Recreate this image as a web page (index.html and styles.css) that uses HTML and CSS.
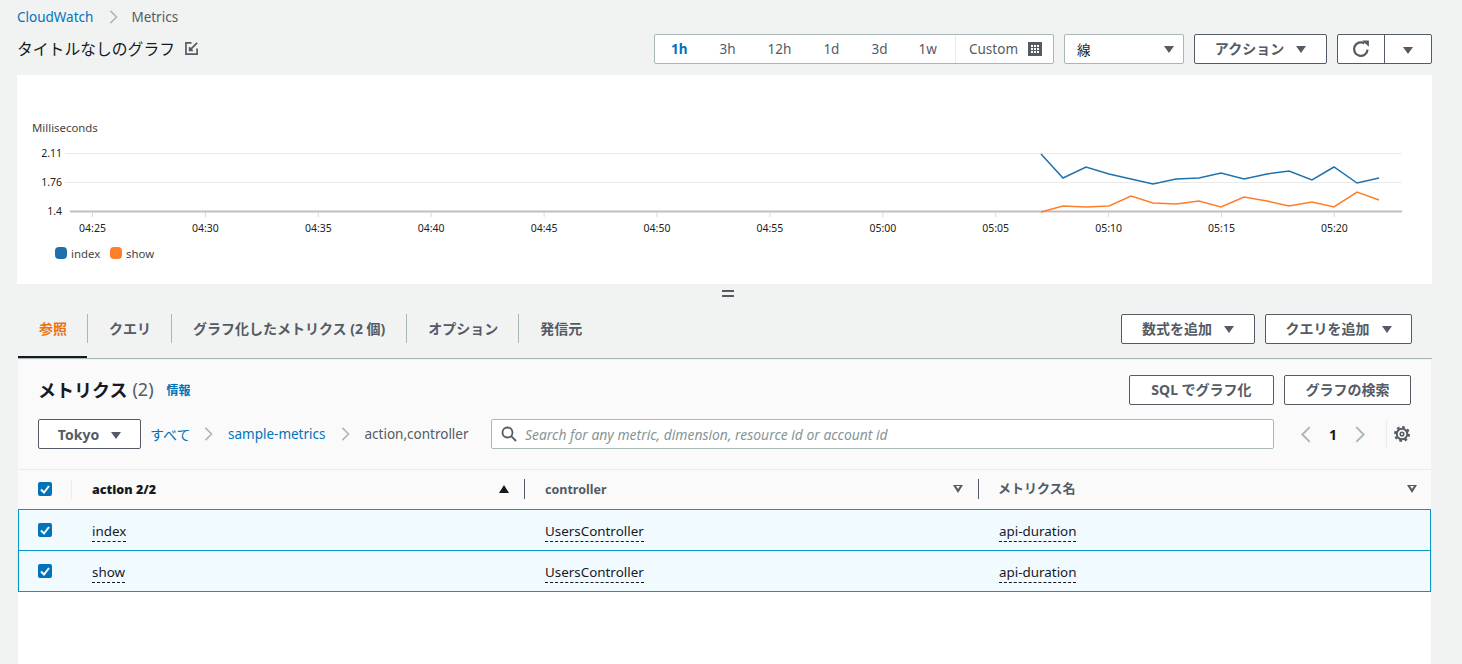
FILE: index.html
```html
<!DOCTYPE html>
<html lang="ja">
<head>
  <meta charset="UTF-8">
  <title>CloudWatch Metrics</title>
  <link rel="stylesheet" href="styles.css">
</head>
<body>
  <!--BREADCRUMB-->
  <div class="crumbs">
    <a href="#">CloudWatch</a>
    <svg class="chev chev-top" viewBox="0 0 9 16"><path d="M1 1l7 7-7 7"/></svg>
    <span>Metrics</span>
  </div>

  <!--TITLE AND TOOLBAR-->
  <div class="title-row">
    <div class="graph-title">
      <span>タイトルなしのグラフ</span>
      <svg class="edit-icon" viewBox="0 0 14 14"><path d="M7 1H1v12h12V7M5 9l8-8M5 5.500V9h3.500"/></svg>
    </div>
    <div class="toolbar">
      <div class="range">
        <a class="range-item active">1h</a>
        <a class="range-item">3h</a>
        <a class="range-item">12h</a>
        <a class="range-item">1d</a>
        <a class="range-item">3d</a>
        <a class="range-item">1w</a>
        <div class="range-custom">
          <span>Custom</span>
          <svg class="cal-icon" viewBox="0 0 14 14"><path class="cal-frame" d="M0 0h14v14H0z"/><path class="cal-dots" d="M3 4h8M3 7h8M3 10h8"/></svg>
        </div>
      </div>
      <div class="select-line"><span>線</span><i class="caret"></i></div>
      <button class="btn btn-action">アクション<i class="caret"></i></button>
      <div class="btn-split">
        <button class="split-left">
          <svg class="refresh-icon" viewBox="0 0 16 16"><path class="refresh-arc" d="M13.800 8.500A6 6 0 1 1 11 3"/><path class="refresh-head" d="M9 .5h6v5.500z"/></svg>
        </button>
        <button class="split-right"><i class="caret"></i></button>
      </div>
    </div>
  </div>

  <!--GRAPH-->
  <div class="chart-panel">
    <svg class="chart" viewBox="17 75 1415 209">
      <text class="axis-title" x="32" y="132">Milliseconds</text>
      <path class="grid" d="M65 153.500H1402M65 182.500H1402"/>
      <path class="axis" d="M70 211.500H1402"/>
      <g class="ylabels">
        <text x="62" y="157">2.11</text>
        <text x="62" y="186">1.76</text>
        <text x="62" y="215">1.4</text>
      </g>
      <g id="xaxis"></g>
      <polyline class="line-blue" points="1041,154 1063,178 1086,167 1109,174 1131,179 1153,184 1176,179 1199,178 1221,173 1244,179 1267,174 1289,171 1312,180 1334,167 1357,183 1379,178"/>
      <polyline class="line-orange" points="1041,212 1063,206 1086,207 1109,206 1131,196 1153,203 1176,204 1199,201 1221,207 1244,197 1267,201 1289,206 1312,202 1334,207 1357,192 1379,200"/>
      <rect class="swatch-blue" x="55" y="247" width="12" height="12" rx="4"/>
      <text class="legend" x="71" y="258">index</text>
      <rect class="swatch-orange" x="110" y="247" width="12" height="12" rx="4"/>
      <text class="legend" x="126" y="258">show</text>
    </svg>
  </div>

  <div class="handle"><i></i><i></i></div>

  <!--TABS-->
  <div class="tab-bar">
    <div class="tabs">
      <a class="tab tab-active">参照</a>
      <a class="tab">クエリ</a>
      <a class="tab">グラフ化したメトリクス (2 個)</a>
      <a class="tab">オプション</a>
      <a class="tab">発信元</a>
    </div>
    <div class="tab-actions">
      <button class="btn btn-formula">数式を追加<i class="caret"></i></button>
      <button class="btn btn-query">クエリを追加<i class="caret"></i></button>
    </div>
  </div>

  <!--METRICS PANEL-->
  <div class="metrics">
    <div class="metrics-head">
      <div class="metrics-title">
        <h2>メトリクス</h2>
        <span class="count">(2)</span>
        <a class="info">情報</a>
      </div>
      <div class="head-actions">
        <button class="btn btn-sql">SQL でグラフ化</button>
        <button class="btn btn-search">グラフの検索</button>
      </div>
    </div>

    <div class="filter-row">
      <button class="btn btn-region">Tokyo<i class="caret"></i></button>
      <div class="path">
        <a>すべて</a>
        <svg class="chev" viewBox="0 0 9 16"><path d="M1 1l7 7-7 7"/></svg>
        <a>sample-metrics</a>
        <svg class="chev" viewBox="0 0 9 16"><path d="M1 1l7 7-7 7"/></svg>
        <span>action,controller</span>
      </div>
      <div class="search">
        <svg class="search-icon" viewBox="0 0 16 16"><circle cx="6.500" cy="6.500" r="5"/><path d="M10.200 10.200L15 15"/></svg>
        <span>Search for any metric, dimension, resource id or account id</span>
      </div>
      <div class="pager">
        <svg class="chev pager-chev" viewBox="0 0 9 16"><path d="M8 1L1 8l7 7"/></svg>
        <b>1</b>
        <svg class="chev pager-chev" viewBox="0 0 9 16"><path d="M1 1l7 7-7 7"/></svg>
      </div>
      <div class="prefs">
        <svg class="gear-icon" viewBox="0 0 16 16"><circle class="gear-teeth" cx="8" cy="8" r="7"/><circle cx="8" cy="8" r="5.300"/><circle class="gear-hole" cx="8" cy="8" r="1.800"/></svg>
      </div>
    </div>

    <div class="table">
      <div class="row row-head">
        <div class="cell-check"><span class="check"><svg viewBox="0 0 14 14"><path d="M3 7.500l3 3 5-6.500"/></svg></span><i class="check-sep"></i></div>
        <div class="th th-first"><b>action 2/2</b><i class="sort-up"></i><i class="th-sep"></i></div>
        <div class="th"><span>controller</span><i class="sort-down"></i><i class="th-sep"></i></div>
        <div class="th th-last"><span>メトリクス名</span><i class="sort-down"></i></div>
      </div>
      <div class="row row-sel">
        <div class="cell-check"><span class="check"><svg viewBox="0 0 14 14"><path d="M3 7.500l3 3 5-6.500"/></svg></span></div>
        <div class="td"><span>index</span></div>
        <div class="td"><span>UsersController</span></div>
        <div class="td"><span>api-duration</span></div>
      </div>
      <div class="row row-sel">
        <div class="cell-check"><span class="check"><svg viewBox="0 0 14 14"><path d="M3 7.500l3 3 5-6.500"/></svg></span></div>
        <div class="td"><span>show</span></div>
        <div class="td"><span>UsersController</span></div>
        <div class="td"><span>api-duration</span></div>
      </div>
    </div>
    <div class="table-rest"></div>
  </div>

  <script>
    // x axis labels, one every 5 minutes
    const xaxis = document.getElementById("xaxis");
    const times = ["04:25","04:30","04:35","04:40","04:45","04:50","04:55","05:00","05:05","05:10","05:15","05:20"];
    let out = "";
    times.forEach((t, i) => {
      const x = 92.5 + i * 112.9;
      out += `<path class="tick" d="M${x} 212v5"/><text class="xlabel" x="${x}" y="232">${t}</text>`;
    });
    xaxis.innerHTML = out;
  </script>
</body>
</html>
```
FILE: styles.css
```css
* {
  box-sizing: border-box;
}

body {
  margin: 0;
  width: 1462px;
  height: 664px;
  overflow: hidden;
  background-color: #f1f3f3;
  color: #16191f;
  font-family: "Noto Sans", "Noto Sans CJK JP", sans-serif;
  font-size: 13.500px;
}

a {
  color: #0073bb;
  text-decoration: none;
}

button {
  font-family: inherit;
}

/* breadcrumb */
.crumbs {
  display: flex;
  align-items: center;
  height: 20px;
  margin: 7px 0 0 17px;
  font-size: 13.500px;
  color: #545b64;
}

.chev {
  width: 9px;
  height: 14px;
  fill: none;
  stroke: #aab7b8;
  stroke-width: 1.800;
}

.chev-top {
  margin: 0 13px 0 16px;
}

/* title row */
.title-row {
  display: flex;
  justify-content: space-between;
  margin: 7px 30px 0 17px;
  height: 30px;
}

.graph-title {
  display: flex;
  align-items: center;
  padding-bottom: 2px;
  font-size: 15.800px;
  gap: 10px;
}

.edit-icon {
  width: 13px;
  height: 13px;
  fill: none;
  stroke: #545b64;
  stroke-width: 1.800;
}

.toolbar {
  display: flex;
  gap: 10px;
}

.range {
  display: flex;
  align-items: center;
  width: 400px;
  background-color: #fff;
  border: 1px solid #aab7b8;
  border-radius: 2px;
}

.range-item {
  padding: 0 16px;
  color: #545b64;
  font-size: 13.500px;
  line-height: 28px;
}

.range-item:nth-child(6) {
  padding-left: 15px;
}

.range-item.active {
  color: #0073bb;
  font-weight: 700;
}

.range-custom {
  display: flex;
  align-items: center;
  justify-content: space-between;
  width: 98px;
  height: 28px;
  margin-left: auto;
  padding: 0 11px 0 13px;
  border-left: 1px solid #eaeded;
  color: #545b64;
}

.cal-icon {
  width: 14px;
  height: 14px;
}

.cal-frame {
  fill: #545b64;
}

.cal-dots {
  fill: none;
  stroke: #fff;
  stroke-width: 2;
  stroke-dasharray: 2 1;
}

.caret {
  display: inline-block;
  width: 0;
  height: 0;
  border-left: 5.500px solid transparent;
  border-right: 5.500px solid transparent;
  border-top: 7.500px solid #545b64;
}

.select-line {
  display: flex;
  align-items: center;
  justify-content: space-between;
  width: 120px;
  padding: 0 9px 0 12px;
  background-color: #fff;
  border: 1px solid #aab7b8;
  border-radius: 2px;
  color: #16191f;
}

.btn {
  display: inline-flex;
  align-items: center;
  justify-content: center;
  height: 30px;
  padding: 0 0 2px;
  background-color: #fff;
  border: 1px solid #545b64;
  border-radius: 2px;
  color: #545b64;
  font-size: 14px;
  font-weight: 700;
}

.btn .caret {
  margin: 2px 0 0 12px;
}

.btn-action {
  width: 133px;
}

.btn-split {
  display: flex;
  width: 95px;
  background-color: #fff;
  border: 1px solid #545b64;
  border-radius: 2px;
}

.btn-split button {
  padding: 0;
  background: none;
  border: none;
}

.split-left {
  width: 47px;
  border-right: 1px solid #545b64 !important;
}

.split-right {
  flex: 1;
}

.refresh-icon {
  display: block;
  width: 18px;
  height: 18px;
  margin: auto;
}

.refresh-arc {
  fill: none;
  stroke: #545b64;
  stroke-width: 2;
}

.refresh-head {
  fill: #545b64;
}

/* graph */
.chart-panel {
  margin: 11px 30px 0 17px;
  height: 209px;
  background-color: #fff;
}

.chart {
  display: block;
  width: 1415px;
  height: 209px;
  font-size: 10.500px;
}

.chart .grid {
  stroke: #eaeaea;
  fill: none;
}

.chart .axis {
  stroke: #bfbfbf;
  stroke-width: 2;
  fill: none;
}

.chart .tick {
  stroke: #d5dbdb;
  fill: none;
}

.axis-title,
.legend {
  fill: #444;
  font-size: 11.400px;
}

.ylabels text {
  text-anchor: end;
  fill: #222;
}

.xlabel {
  text-anchor: middle;
  fill: #222;
}

.line-blue,
.line-orange {
  fill: none;
  stroke-width: 1.500;
}

.line-blue {
  stroke: #1f72ad;
}

.line-orange {
  stroke: #ff7e2a;
}

.swatch-blue {
  fill: #1f6fad;
}

.swatch-orange {
  fill: #ff7e2a;
}

/* drag handle */
.handle {
  display: flex;
  flex-direction: column;
  align-items: center;
  justify-content: center;
  gap: 3px;
  height: 18px;
  padding-right: 6px;
}

.handle i {
  width: 12px;
  height: 2px;
  background-color: #545b64;
}

/* tabs */
.tab-bar {
  display: flex;
  justify-content: space-between;
  margin: 0 30px 0 18px;
  height: 57px;
  border-bottom: 1px solid #aab7b8;
}

.tabs {
  display: flex;
  padding-top: 12px;
}

.tab {
  position: relative;
  height: 29px;
  padding: 0 20px 0 21px;
  border-right: 1px solid #aab7b8;
  color: #545b64;
  font-size: 14px;
  font-weight: 700;
  line-height: 29px;
}

.tab:nth-child(3) {
  padding-right: 21px;
}

.tab:last-child {
  border-right: none;
}

.tab-active {
  color: #ec7211;
}

.tab-active::after {
  content: "";
  position: absolute;
  left: 0;
  right: 0;
  bottom: -15px;
  height: 2px;
  background-color: #16191f;
}

.tab-actions {
  display: flex;
  gap: 10px;
  padding: 12px 20px 0 0;
}

.btn-formula {
  width: 134px;
}

.btn-query {
  width: 147px;
}

/* metrics panel */
.metrics {
  margin: 1px 31px 0 18px;
  height: 305px;
  background-color: #fafafa;
}

.metrics-head {
  display: flex;
  justify-content: space-between;
  padding: 15px 20px 0 20px;
}

.metrics-title {
  display: flex;
  align-items: center;
  padding-bottom: 2px;
}

.metrics-title h2 {
  margin: 0;
  font-size: 18px;
  font-weight: 700;
}

.count {
  margin-left: 5px;
  color: #545b64;
  font-size: 18px;
}

.info {
  margin: 2px 0 0 13px;
  font-size: 12px;
  font-weight: 700;
}

.head-actions {
  display: flex;
  gap: 10px;
}

.btn-sql {
  width: 145px;
}

.btn-search {
  width: 127px;
}

.filter-row {
  display: flex;
  align-items: center;
  height: 30px;
  margin-top: 14px;
  padding-left: 20px;
}

.btn-region {
  width: 103px;
  padding: 0;
  flex-shrink: 0;
}

.path {
  display: flex;
  align-items: center;
  width: 350px;
  padding-left: 9px;
  font-size: 13.500px;
  color: #545b64;
}

.path a:first-child {
  margin-right: -1.500px;
  font-size: 14px;
}

.path .chev {
  margin: 0 15px;
}

.search {
  display: flex;
  align-items: center;
  gap: 8px;
  width: 783px;
  height: 30px;
  padding-left: 9px;
  background-color: #fff;
  border: 1px solid #aab7b8;
  border-radius: 2px;
  color: #879596;
  font-size: 13.900px;
  font-style: italic;
}

.search-icon {
  width: 16px;
  height: 16px;
  fill: none;
  stroke: #545b64;
  stroke-width: 1.800;
}

.pager {
  display: flex;
  align-items: center;
  justify-content: space-between;
  width: 64px;
  margin-left: 27px;
  font-size: 14px;
}

.pager-chev {
  width: 10px;
  height: 17px;
}

.prefs {
  display: flex;
  align-items: center;
  height: 28px;
  margin-left: 21px;
  padding-left: 7px;
  border-left: 1px solid #eaeded;
}

.gear-icon {
  width: 16px;
  height: 16px;
  fill: none;
  stroke: #545b64;
  stroke-width: 2;
}

.gear-teeth {
  stroke-width: 2;
  stroke-dasharray: 2.700 2.800;
}

.gear-hole {
  stroke-width: 1.500;
}

/* table */
.table {
  margin-top: 20px;
  border-top: 1px solid #eaeded;
}

.row {
  display: grid;
  grid-template-columns: 74px 453px 454px 1fr;
  align-items: center;
}

.row-head {
  height: 39px;
  padding-bottom: 2px;
}

.row-sel {
  grid-template-columns: 73px 453px 454px 1fr;
  height: 42px;
  margin-bottom: -1px;
  background-color: #f1faff;
  border: 1px solid #0a97c5;
}

.row-sel:last-child {
  margin-bottom: 0;
  box-shadow: 0 1px 1px rgba(0, 28, 36, 0.3);
}

.cell-check {
  display: flex;
  align-items: center;
  padding-left: 20px;
}

.row-sel .cell-check {
  padding-left: 19px;
}

.check {
  display: block;
  width: 14px;
  height: 14px;
  background-color: #0073bb;
  border-radius: 2px;
}

.check svg {
  display: block;
  fill: none;
  stroke: #fff;
  stroke-width: 2;
}

.check-sep {
  width: 1px;
  height: 20px;
  margin-left: 19px;
  background-color: #eaeded;
}

.th {
  display: flex;
  align-items: center;
  color: #545b64;
  font-size: 12.500px;
  font-weight: 700;
}

.th b {
  color: #16191f;
}

.th > :first-child {
  flex: 1;
  margin-top: 2px;
}

.th-last {
  padding-right: 14px;
  font-size: 13px;
}

.th-last > :first-child {
  margin: 0 0 2px -1px;
}

.th-sep {
  width: 1px;
  height: 20px;
  margin: 0 20px 0 15px;
  background-color: #545b64;
}

.sort-up {
  width: 0;
  height: 0;
  border-left: 5px solid transparent;
  border-right: 5px solid transparent;
  border-bottom: 8px solid #16191f;
}

.sort-down {
  position: relative;
  width: 0;
  height: 0;
  border-left: 5px solid transparent;
  border-right: 5px solid transparent;
  border-top: 8px solid #545b64;
}

.sort-down::after {
  content: "";
  position: absolute;
  left: -2.500px;
  top: -6.500px;
  width: 0;
  height: 0;
  border-left: 2.500px solid transparent;
  border-right: 2.500px solid transparent;
  border-top: 3.500px solid #fafafa;
}

.td {
  padding-top: 2px;
}

.td span {
  padding-bottom: 1px;
  border-bottom: 1px dashed #16191f;
  font-size: 13.400px;
}

.table-rest {
  height: 100px;
  background-color: #fff;
}
```
